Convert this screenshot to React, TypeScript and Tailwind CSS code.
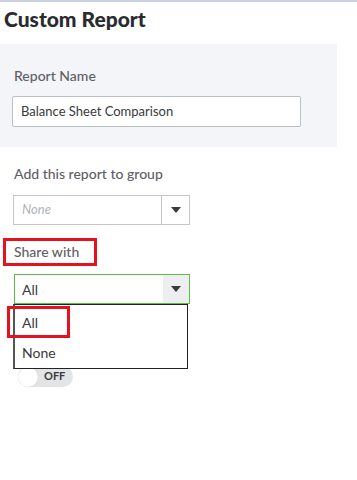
import React from "react";

const Caret = () => (
  <svg width="10" height="6" viewBox="0 0 10 6">
    <path d="M0 0 H10 L5 6 Z" fill="#393a3d" />
  </svg>
);

const App = () => {
  return (
    <div className="w-[357px] h-[480px] bg-white border-t-2 border-[#c9d1e0] font-['Lato',sans-serif] overflow-hidden">
      <h1 className="pl-[4px] pt-[5px] text-[21px] leading-[24px] font-black text-[#2a2b2e]">Custom Report</h1>

      <div className="mt-[13px] w-[337px] h-[103px] bg-[#f4f5f8] pt-[24px]">
        <div className="pl-[14px] text-[14px] leading-[16px] font-medium text-[#5f6066]">Report Name</div>
        <div className="mt-[12px] ml-[12px] w-[289px] h-[31px] bg-white border border-[#babec5] rounded-[2px] flex items-center pl-[8px] text-[13px] text-[#393a3d]">
          Balance Sheet Comparison
        </div>
      </div>

      <div className="mt-[19px] pl-[14px] text-[14px] leading-[16px] font-medium text-[#5f6066]">
        Add this report to group
      </div>
      <div className="mt-[13px] ml-[13px] w-[177px] h-[30px] border border-[#c4c6cc] flex bg-white">
        <div className="flex-1 flex items-center pl-[8px] text-[13px] italic text-[#b0b3b8]">None</div>
        <div className="w-[28px] border-l border-[#c4c6cc] flex items-center justify-center">
          <Caret />
        </div>
      </div>

      <div className="mt-[13px] ml-[3px] w-[94px] h-[28px] border-[3px] border-[#e4121e] pl-[8px] pt-[3px] text-[14px] leading-[16px] font-medium text-[#5f6066]">
        Share with
      </div>

      <div className="relative mt-[8px] ml-[14px] w-[176px]">
        <div className="h-[30px] border border-[#5dbb46] flex bg-white">
          <div className="flex-1 flex items-center pl-[7px] text-[14px] text-[#393a3d]">All</div>
          <div className="w-[26px] bg-[#eceef1] flex items-center justify-center">
            <Caret />
          </div>
        </div>
        <div className="absolute z-10 left-[-1px] top-[30px] w-[175px] h-[65px] bg-white border border-[#222] border-l-[2px] border-l-[#555] text-[14px] text-[#393a3d]">
          <div className="h-[32px] flex items-center pl-[7px] pt-[2px]">All</div>
          <div className="h-[31px] flex items-center pl-[7px]">None</div>
          <div className="absolute left-[-8px] top-[1px] w-[63px] h-[32px] border-[3px] border-[#e4121e]" />
        </div>
      </div>

      <div className="mt-[62px] ml-[18px] w-[55px] h-[21px] rounded-full bg-[#e3e4e6] flex items-center">
        <div className="w-[20px] h-[20px] rounded-full bg-white shadow-[0_0_1px_rgba(0,0,0,0.2)]" />
        <span className="ml-[6px] text-[11px] font-bold text-[#393a3d]">OFF</span>
      </div>
    </div>
  );
};

export default App;
